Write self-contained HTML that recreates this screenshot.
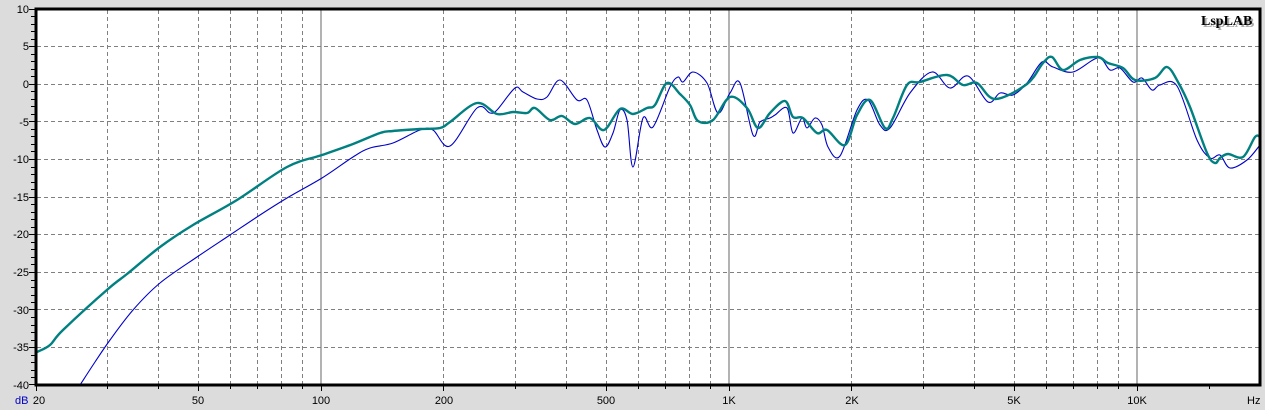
<!DOCTYPE html>
<html><head><meta charset="utf-8"><style>
html,body{margin:0;padding:0;background:#dcdcdc;}
svg{display:block;}
text{font-family:"Liberation Sans",sans-serif;font-size:11px;fill:#000;}
</style></head><body>
<svg width="1265" height="410" viewBox="0 0 1265 410" xmlns="http://www.w3.org/2000/svg">
<rect x="0" y="0" width="1265" height="410" fill="#dcdcdc"/>
<rect x="36" y="9" width="1224" height="376" fill="#fff"/>
<g stroke="#808080" stroke-width="1" stroke-dasharray="4,3" fill="none">
<path d="M37 46.5H1259M37 84.5H1259M37 121.5H1259M37 159.5H1259M37 197.5H1259M37 234.5H1259M37 272.5H1259M37 309.5H1259M37 347.5H1259"/>
<path d="M107.5 10V385M158.5 10V385M198.5 10V385M230.5 10V385M257.5 10V385M281.5 10V385M302.5 10V385M443.5 10V385M515.5 10V385M566.5 10V385M606.5 10V385M638.5 10V385M665.5 10V385M689.5 10V385M710.5 10V385M851.5 10V385M923.5 10V385M974.5 10V385M1014.5 10V385M1046.5 10V385M1073.5 10V385M1097.5 10V385M1118.5 10V385"/>
</g>
<g stroke="#808080" stroke-width="1.2"><path d="M321 10V385M729 10V385M1137 10V385"/></g>
<polyline class="sm" fill="none" stroke="#0000c8" stroke-width="1.1" stroke-linejoin="round" points="80,385 95,362 110,340 133,310 160,283 197,257 230,235 260,215 287,198 322,178 353,157 370,148 393,143 420,130 433,130 450,146 477,108 490,113 497,110 515,88 523,92 537,99 547,97 560,80 577,100 587,100 597,130 605,147 613,133 620,110 627,120 633,167 643,118 653,127 670,87 678,77 683,82 693,72 707,83 718,113 730,93 740,83 753,135 760,122 770,118 775,115 787,108 793,133 802,118 807,128 815,118 822,125 828,147 840,156 857,110 868,100 880,125 890,128 910,93 932,72 950,88 968,76 988,102 1000,93 1013,95 1027,83 1042,62 1053,67 1073,72 1098,58 1110,70 1120,68 1133,82 1142,78 1152,90 1160,85 1177,86 1197,140 1210,158 1220,155 1230,168 1247,160 1260,145"/>
<polyline class="sm" fill="none" stroke="#008080" stroke-width="2.4" stroke-linejoin="round" points="37,352 50,345 63,330 108,289 127,274 160,247 193,225 237,200 287,167 322,155 353,144 380,133 393,131 420,129 440,128 450,122 477,103 497,114 513,112 527,113 535,108 550,120 562,116 575,124 590,118 604,130 620,109 633,114 647,108 655,105 667,83 680,94 690,105 698,121 713,120 730,97 747,108 758,128 770,113 785,101 793,117 803,118 817,133 827,130 845,145 857,115 870,100 885,128 893,118 907,85 920,82 947,75 963,85 977,83 995,99 1027,84 1043,63 1052,57 1063,70 1080,60 1098,57 1108,63 1123,68 1135,80 1155,78 1167,67 1178,82 1190,107 1207,153 1215,163 1220,158 1228,154 1243,157 1255,137 1260,137"/>
<rect x="36" y="9" width="1224" height="376" fill="none" stroke="#000" stroke-width="3"/>
<g stroke="#000" stroke-width="1">
<path d="M31 16.5h5M31 24.5h5M31 31.5h5M31 39.5h5M31 54.5h5M31 61.5h5M31 69.5h5M31 76.5h5M31 91.5h5M31 99.5h5M31 106.5h5M31 114.5h5M31 129.5h5M31 136.5h5M31 144.5h5M31 151.5h5M31 167.5h5M31 174.5h5M31 182.5h5M31 189.5h5M31 204.5h5M31 212.5h5M31 219.5h5M31 227.5h5M31 242.5h5M31 249.5h5M31 257.5h5M31 264.5h5M31 280.5h5M31 287.5h5M31 295.5h5M31 302.5h5M31 317.5h5M31 325.5h5M31 332.5h5M31 340.5h5M31 355.5h5M31 362.5h5M31 370.5h5M31 377.5h5"/>
<path d="M29 9.5h7M29 46.5h7M29 84.5h7M29 121.5h7M29 159.5h7M29 197.5h7M29 234.5h7M29 272.5h7M29 309.5h7M29 347.5h7M29 384.5h7"/>
<path d="M36.5 385v6M107.5 385v4M158.5 385v4M198.5 385v6M230.5 385v4M257.5 385v4M281.5 385v4M302.5 385v4M321.5 385v6M443.5 385v6M515.5 385v4M566.5 385v4M606.5 385v6M638.5 385v4M665.5 385v4M689.5 385v4M710.5 385v4M729.5 385v6M851.5 385v6M923.5 385v4M974.5 385v4M1014.5 385v6M1046.5 385v4M1073.5 385v4M1097.5 385v4M1118.5 385v4M1137.5 385v6M1209.5 385v4"/>
</g>
<g text-anchor="end">
<text x="29" y="13">10</text><text x="29" y="50">5</text><text x="29" y="88">0</text><text x="29" y="126">-5</text><text x="29" y="163">-10</text><text x="29" y="201">-15</text><text x="29" y="238">-20</text><text x="29" y="276">-25</text><text x="29" y="314">-30</text><text x="29" y="351">-35</text><text x="29" y="389">-40</text>
</g>
<text x="15" y="404" style="fill:#0000c8">dB</text>
<g text-anchor="middle">
<text x="39" y="404">20</text><text x="198" y="404">50</text><text x="321" y="404">100</text><text x="444" y="404">200</text><text x="606" y="404">500</text><text x="729" y="404">1K</text><text x="852" y="404">2K</text><text x="1014" y="404">5K</text><text x="1137" y="404">10K</text>
</g>
<text x="1247" y="404">Hz</text>
<text x="1203" y="27" style="font-family:'Liberation Serif',serif;font-weight:bold;font-size:14px;fill:#aaa">LspLAB</text>
<text x="1201" y="25" style="font-family:'Liberation Serif',serif;font-weight:bold;font-size:14px;fill:#000">LspLAB</text>
</svg>
<script>
document.querySelectorAll('polyline.sm').forEach(function(pl){
  var p=pl.getAttribute('points').trim().split(/\s+/).map(function(s){var a=s.split(',');return [+a[0],+a[1]];});
  var d='M'+p[0][0]+' '+p[0][1];
  for(var i=0;i<p.length-1;i++){
    var p0=p[i-1]||p[i],p1=p[i],p2=p[i+1],p3=p[i+2]||p2;
    var c1x=p1[0]+(p2[0]-p0[0])/6,c1y=p1[1]+(p2[1]-p0[1])/6;
    var c2x=p2[0]-(p3[0]-p1[0])/6,c2y=p2[1]-(p3[1]-p1[1])/6;
    d+=' C'+c1x.toFixed(1)+' '+c1y.toFixed(1)+' '+c2x.toFixed(1)+' '+c2y.toFixed(1)+' '+p2[0]+' '+p2[1];
  }
  var path=document.createElementNS('http://www.w3.org/2000/svg','path');
  ['fill','stroke','stroke-width','stroke-linejoin'].forEach(function(a){path.setAttribute(a,pl.getAttribute(a));});
  path.setAttribute('d',d);
  pl.parentNode.replaceChild(path,pl);
});
</script>
</body></html>
